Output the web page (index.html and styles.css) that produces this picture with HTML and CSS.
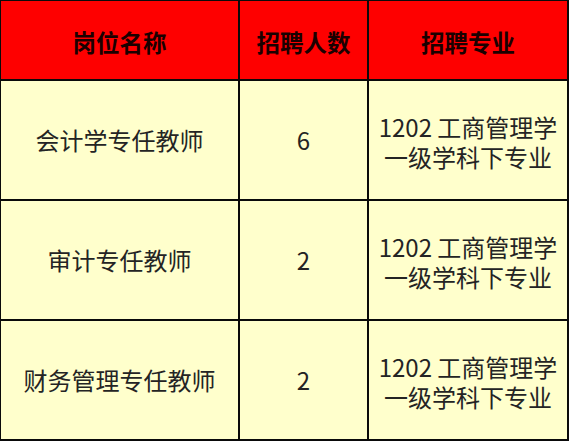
FILE: index.html
```html
<!DOCTYPE html>
<html lang="zh-CN">
<head>
<meta charset="utf-8">
<link rel="stylesheet" href="styles.css">
</head>
<body>
<div class="table">
  <div class="cell head">岗位名称</div>
  <div class="cell head">招聘人数</div>
  <div class="cell head">招聘专业</div>

  <div class="cell">会计学专任教师</div>
  <div class="cell">6</div>
  <div class="cell two">1202 工商管理学<br>一级学科下专业</div>

  <div class="cell">审计专任教师</div>
  <div class="cell">2</div>
  <div class="cell two">1202 工商管理学<br>一级学科下专业</div>

  <div class="cell">财务管理专任教师</div>
  <div class="cell">2</div>
  <div class="cell two">1202 工商管理学<br>一级学科下专业</div>
</div>
</body>
</html>
```
FILE: styles.css
```css
html, body {
  margin: 0;
  padding: 0;
  background: #ffffff;
}
.table {
  width: 569px;
  height: 441px;
  box-sizing: border-box;
  background: #0a0a0a;
  padding: 1px 2px 2px 1px;
  display: grid;
  grid-template-columns: 237px 127px 198px;
  grid-template-rows: 78px 118px 118px 118px;
  gap: 2px;
  font-family: "Noto Sans CJK SC", "Noto Sans", sans-serif;
}
.cell {
  background: #ffffcc;
  color: #242424;
  display: flex;
  align-items: center;
  justify-content: center;
  text-align: center;
  font-size: 24px;
  line-height: 30px;
}
.head {
  background: #fe0000;
  color: #1a0000;
  font-weight: bold;
  font-size: 23.5px;
  padding-top: 4px;
  box-sizing: border-box;
}
.two {
  padding-top: 3px;
  box-sizing: border-box;
}
```
